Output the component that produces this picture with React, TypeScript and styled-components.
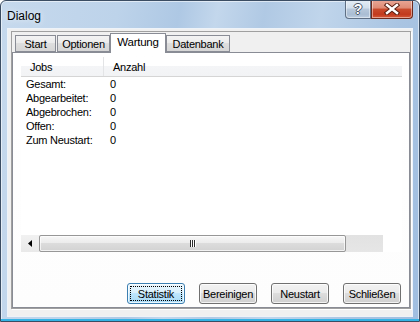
import React from 'react';
import styled, { createGlobalStyle } from 'styled-components';

const GlobalStyle = createGlobalStyle`
  html, body {
    margin: 0;
    padding: 0;
    background: #ffffff;
  }
  * {
    box-sizing: border-box;
  }
`;

const Window = styled.div`
  width: 420px;
  height: 322px;
  border: 1px solid #3b4d63;
  border-radius: 6px 6px 0 0;
  background: linear-gradient(
    100deg,
    #c6d9ed 0%,
    #bdd3ea 25%,
    #aec8e4 38%,
    #c3d7ec 46%,
    #b0c9e4 56%,
    #c0d5eb 68%,
    #a9c4e2 85%,
    #a0bee0 100%
  );
  box-shadow: inset 0 -2px 0 #35b3e4, inset 0 0 0 1px rgba(255, 255, 255, 0.55);
  display: flex;
  flex-direction: column;
  overflow: hidden;
  font-family: 'Liberation Sans', Arial, sans-serif;
  font-size: 11px;
  letter-spacing: -0.25px;
  color: #000;
`;

const TitleBar = styled.div`
  height: 27px;
  display: flex;
  align-items: flex-start;
  justify-content: space-between;
  flex-shrink: 0;
`;

const Title = styled.div`
  font-size: 12px;
  letter-spacing: 0;
  padding: 8px 0 0 6px;
  color: #000;
  text-shadow: 0 0 6px rgba(255, 255, 255, 0.9);
`;

const CaptionButtons = styled.div`
  display: flex;
  margin: -1px 6px 0 0;
`;

const CaptionButton = styled.div<{ $close?: boolean }>`
  height: 19px;
  width: ${p => (p.$close ? 42 : 26)}px;
  display: flex;
  align-items: center;
  justify-content: center;
  border: 1px solid ${p => (p.$close ? '#6e2a1d' : '#5f6f84')};
  border-top: none;
  border-radius: ${p => (p.$close ? '0 0 4px 0' : '0 0 0 4px')};
  background: ${p =>
    p.$close
      ? 'linear-gradient(#e9a898 0%, #de8a74 45%, #c94b2d 50%, #c23a1e 80%, #d65a3a 100%)'
      : 'linear-gradient(#e6eef6 0%, #d2dfec 45%, #b7c8db 50%, #aabdd3 80%, #bccde0 100%)'};
  box-shadow: inset 0 0 0 1px rgba(255, 255, 255, 0.45);
  color: #fff;
  font-weight: bold;
  font-size: 14px;
  text-shadow: -1px 0 #4b5668, 1px 0 #4b5668, 0 -1px #4b5668, 0 1px #4b5668;
`;

const Client = styled.div`
  flex: 1;
  margin: 0 6px 4px 6px;
  border: 1px solid #eef3f9;
  background: #f0f0f0;
  padding: 2px 1px 0 3px;
`;

const Frame = styled.div`
  width: 400px;
  height: 278px;
  border: 1px solid #a0a0a0;
  box-shadow: 1px 1px 0 #ffffff;
  display: flex;
  flex-direction: column;
`;

const TabStrip = styled.div`
  height: 20px;
  display: flex;
  align-items: flex-end;
  flex-shrink: 0;
`;

const Tab = styled.div<{ $active?: boolean; $w: number; $ml: number }>`
  width: ${p => p.$w}px;
  margin-left: ${p => p.$ml}px;
  height: ${p => (p.$active ? 20 : 17)}px;
  margin-bottom: ${p => (p.$active ? -1 : 0)}px;
  border: 1px solid #898c95;
  border-bottom: ${p => (p.$active ? 'none' : '1px solid #898c95')};
  background: ${p =>
    p.$active ? '#ffffff' : 'linear-gradient(#f3f3f3 0%, #ebebeb 50%, #dedede 50%, #d6d6d6 100%)'};
  display: flex;
  align-items: ${p => (p.$active ? 'flex-start' : 'center')};
  padding-top: ${p => (p.$active ? 2 : 0)}px;
  justify-content: center;
  position: relative;
  z-index: ${p => (p.$active ? 1 : 0)};
  font-size: ${p => (p.$active ? 11.5 : 11)}px;
`;

const TabPage = styled.div`
  flex: 1;
  border: 1px solid #898c95;
  background: linear-gradient(#ffffff 0%, #fdfdfd 100%);
  display: flex;
  flex-direction: column;
  padding: 4px 7px 0 8px;
`;

const ListView = styled.div`
  display: flex;
  flex-direction: column;
  background: #ffffff;
`;

const HeaderRow = styled.div`
  display: grid;
  grid-template-columns: 83px 1fr;
  height: 20px;
  background: linear-gradient(#ffffff 0%, #ffffff 45%, #f4f5f7 45%, #f2f3f5 100%);
  border-bottom: 1px solid #d5d5d5;
`;

const HeaderCell = styled.div<{ $divider?: boolean }>`
  display: flex;
  align-items: center;
  padding-left: 9px;
  border-right: ${p => (p.$divider ? '1px solid #e3e4e6' : 'none')};
`;

const Body = styled.div`
  height: 158px;
`;

const Row = styled.div`
  display: grid;
  grid-template-columns: 83px 1fr;
  height: 14px;
  line-height: 14px;
`;

const Cell = styled.div<{ $pad: number }>`
  padding-left: ${p => p.$pad}px;
  white-space: nowrap;
`;

const HScroll = styled.div`
  width: 362px;
  height: 17px;
  display: flex;
  background: #e8e8e8;
`;

const ArrowButton = styled.div`
  width: 18px;
  display: flex;
  align-items: center;
  justify-content: center;
  background: linear-gradient(#f1f1f1, #e9e9e9);
`;

const Thumb = styled.div`
  width: 307px;
  border: 1px solid #979797;
  border-radius: 2px;
  background: linear-gradient(#f7f7f7 0%, #ececec 45%, #dcdcdc 50%, #d2d2d2 100%);
  box-shadow: inset 0 0 0 1px rgba(255, 255, 255, 0.7);
  display: flex;
  align-items: center;
  justify-content: center;
`;

const Grip = styled.div`
  display: flex;
  gap: 1px;
`;

const GripLine = styled.div`
  width: 1px;
  height: 7px;
  background: #2d2d2d;
  box-shadow: 1px 0 0 #ffffff;
`;

const Track = styled.div`
  flex: 1;
  background: linear-gradient(#e2e2e2, #e6e6e6);
`;

const ButtonRow = styled.div`
  display: flex;
  justify-content: flex-end;
  gap: 14px;
  margin-top: 31px;
  padding-right: 1px;
`;

const Button = styled.div<{ $default?: boolean }>`
  width: 58px;
  height: 21px;
  border: 1px solid ${p => (p.$default ? '#3c7fb1' : '#707070')};
  border-radius: 3px;
  background: ${p =>
    p.$default
      ? 'linear-gradient(#eaf6fd 0%, #d9f0fc 45%, #bee6fd 50%, #a7d9f5 100%)'
      : 'linear-gradient(#f2f2f2 0%, #ebebeb 45%, #dddddd 50%, #cfcfcf 100%)'};
  box-shadow: inset 0 0 0 1px rgba(255, 255, 255, 0.75);
  display: flex;
  align-items: center;
  justify-content: center;
  position: relative;
`;

const FocusRing = styled.div`
  position: absolute;
  inset: 2px;
  border: 1px dotted #000;
`;

const tabs = [
  { label: 'Start', w: 41, ml: 3 },
  { label: 'Optionen', w: 53, ml: 1 },
  { label: 'Wartung', w: 56, ml: 0, active: true },
  { label: 'Datenbank', w: 64, ml: 0 },
];

const rows = [
  ['Gesamt:', '0'],
  ['Abgearbeitet:', '0'],
  ['Abgebrochen:', '0'],
  ['Offen:', '0'],
  ['Zum Neustart:', '0'],
];

const buttons = ['Statistik', 'Bereinigen', 'Neustart', 'Schließen'];

export default function App() {
  return (
    <>
      <GlobalStyle />
      <Window>
        <TitleBar>
          <Title>Dialog</Title>
          <CaptionButtons>
            <CaptionButton>?</CaptionButton>
            <CaptionButton $close>
              <svg width="16" height="12" viewBox="0 0 16 12">
                <path d="M3 2 L13 10 M13 2 L3 10" stroke="#5a1f12" strokeWidth="4.4" strokeLinecap="square" />
                <path d="M3 2 L13 10 M13 2 L3 10" stroke="#ffffff" strokeWidth="2.4" strokeLinecap="square" />
              </svg>
            </CaptionButton>
          </CaptionButtons>
        </TitleBar>
        <Client>
          <Frame>
            <TabStrip>
              {tabs.map(t => (
                <Tab key={t.label} $w={t.w} $ml={t.ml} $active={t.active}>
                  {t.label}
                </Tab>
              ))}
            </TabStrip>
            <TabPage>
              <ListView>
                <HeaderRow>
                  <HeaderCell $divider>Jobs</HeaderCell>
                  <HeaderCell>Anzahl</HeaderCell>
                </HeaderRow>
                <Body>
                  {rows.map(([name, count]) => (
                    <Row key={name}>
                      <Cell $pad={5}>{name}</Cell>
                      <Cell $pad={6}>{count}</Cell>
                    </Row>
                  ))}
                </Body>
                <HScroll>
                  <ArrowButton>
                    <svg width="4" height="7" viewBox="0 0 4 7">
                      <path d="M4 0 L0 3.5 L4 7 Z" fill="#000" />
                    </svg>
                  </ArrowButton>
                  <Thumb>
                    <Grip>
                      <GripLine />
                      <GripLine />
                      <GripLine />
                    </Grip>
                  </Thumb>
                  <Track />
                </HScroll>
              </ListView>
              <ButtonRow>
                {buttons.map((b, i) => (
                  <Button key={b} $default={i === 0}>
                    {i === 0 && <FocusRing />}
                    {b}
                  </Button>
                ))}
              </ButtonRow>
            </TabPage>
          </Frame>
        </Client>
      </Window>
    </>
  );
}
